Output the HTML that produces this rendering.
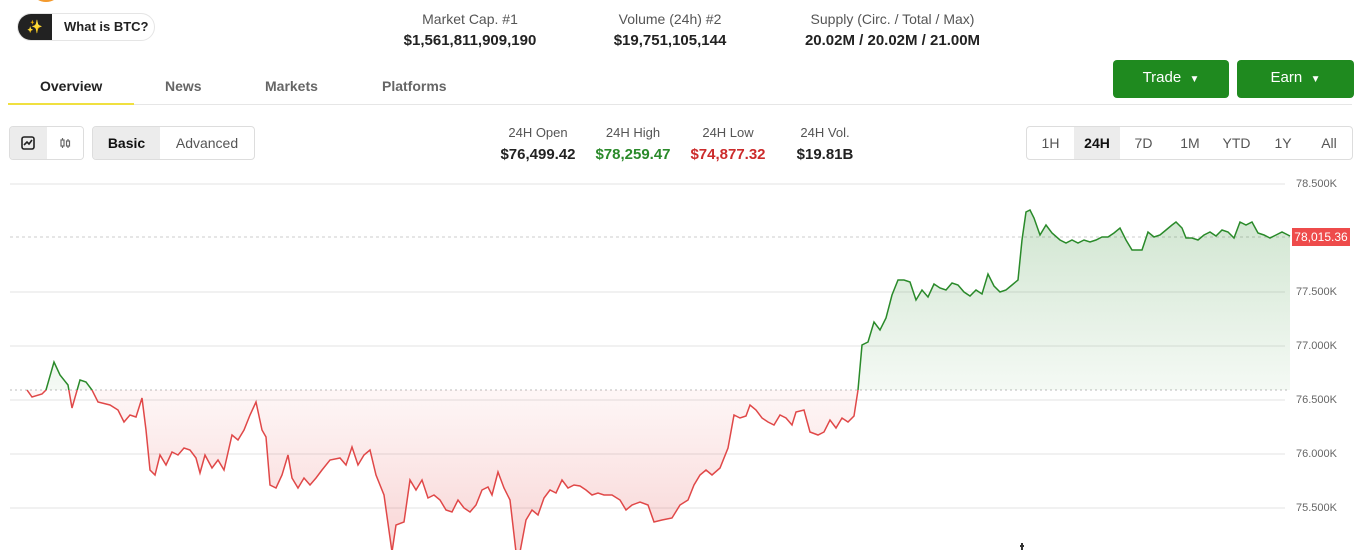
<!DOCTYPE html>
<html><head><meta charset="utf-8"><style>
*{margin:0;padding:0;box-sizing:border-box}
body{width:1370px;height:550px;overflow:hidden;background:#fff;font-family:"Liberation Sans",sans-serif;color:#222;position:relative}
.a{position:absolute}
.stat{text-align:center;font-size:14px;color:#555}
.stat b{display:block;font-size:15px;color:#222;margin-top:5px}
.tab{font-size:14px;color:#666;font-weight:bold}
.btn{background:#1f8a1f;color:#fff;font-size:15px;border-radius:4px;text-align:center;line-height:36px;height:38px}
.seg{border:1px solid #ddd;border-radius:4px;display:flex;overflow:hidden;height:34px}
.seg div{display:flex;align-items:center;justify-content:center;font-size:14px;color:#555}
.seg .on{background:#ececec;color:#111;font-weight:bold}
.ohl{text-align:center;font-size:13px;color:#555}
.ohl b{display:block;font-size:15px;margin-top:6px;color:#222}
.yl{position:absolute;left:1296px;font-size:11px;color:#666}
</style></head><body>
<div class="a" style="left:34px;top:-14px;width:24px;height:16px;border-radius:50%;background:#f39a2e"></div>
<div class="a" style="left:17px;top:13px;width:138px;height:28px;border:1px solid #e5e5e5;border-radius:14px;overflow:hidden;display:flex">
<div style="width:34px;background:#222;color:#f5c518;font-size:13px;text-align:center;line-height:26px">✨</div>
<div style="font-size:13px;font-weight:bold;line-height:26px;padding-left:12px">What is BTC?</div></div>
<div class="a stat" style="left:370px;top:11px;width:200px">Market Cap. #1<b>$1,561,811,909,190</b></div>
<div class="a stat" style="left:580px;top:11px;width:180px">Volume (24h) #2<b>$19,751,105,144</b></div>
<div class="a stat" style="left:780px;top:11px;width:225px">Supply (Circ. / Total / Max)<b>20.02M / 20.02M / 21.00M</b></div>
<div class="a tab" style="left:40px;top:78px;color:#222">Overview</div>
<div class="a tab" style="left:165px;top:78px">News</div>
<div class="a tab" style="left:265px;top:78px">Markets</div>
<div class="a tab" style="left:382px;top:78px">Platforms</div>
<div class="a" style="left:8px;top:104px;width:1344px;height:1px;background:#e6e6e6"></div>
<div class="a" style="left:8px;top:103px;width:126px;height:2px;background:#f0e040"></div>
<div class="a btn" style="left:1113px;top:60px;width:116px">Trade &nbsp;<span style="font-size:10px">▼</span></div>
<div class="a btn" style="left:1237px;top:60px;width:117px">Earn &nbsp;<span style="font-size:10px">▼</span></div>
<div class="a seg" style="left:9px;top:126px;width:75px"><div class="on" style="width:37px">
<svg width="14" height="14" viewBox="0 0 14 14"><rect x="1" y="1" width="12" height="12" rx="2" fill="none" stroke="#222" stroke-width="1.6"/><path d="M3 9 L6 6 L8 8 L11 4" fill="none" stroke="#222" stroke-width="1.6"/></svg></div>
<div style="width:37px;background:#fff"><svg width="14" height="14" viewBox="0 0 14 14"><rect x="3" y="4" width="3" height="6" fill="none" stroke="#666" stroke-width="1.2"/><rect x="8.5" y="5" width="3" height="5" fill="none" stroke="#666" stroke-width="1.2"/><path d="M4.5 2v2M4.5 10v2M10 3v2M10 10v2" stroke="#666" stroke-width="1.2"/></svg></div></div>
<div class="a seg" style="left:92px;top:126px;width:163px"><div class="on" style="width:67px">Basic</div><div style="flex:1">Advanced</div></div>
<div class="a ohl" style="left:498px;top:125px;width:80px">24H Open<b>$76,499.42</b></div>
<div class="a ohl" style="left:593px;top:125px;width:80px">24H High<b style="color:#2a8a2a">$78,259.47</b></div>
<div class="a ohl" style="left:688px;top:125px;width:80px">24H Low<b style="color:#cc2b2b">$74,877.32</b></div>
<div class="a ohl" style="left:785px;top:125px;width:80px">24H Vol.<b>$19.81B</b></div>
<div class="a seg" style="left:1026px;top:126px;width:327px"><div style="width:47px">1H</div><div class="on" style="width:46px">24H</div><div style="width:47px">7D</div><div style="width:46px">1M</div><div style="width:47px">YTD</div><div style="width:46px">1Y</div><div style="flex:1">All</div></div>
<svg class="a" style="left:0;top:0" width="1370" height="550">
<defs>
<linearGradient id="gg" x1="0" y1="210" x2="0" y2="390" gradientUnits="userSpaceOnUse"><stop offset="0" stop-color="#2a8a2a" stop-opacity=".22"/><stop offset="1" stop-color="#2a8a2a" stop-opacity=".05"/></linearGradient>
<linearGradient id="rg" x1="0" y1="390" x2="0" y2="550" gradientUnits="userSpaceOnUse"><stop offset="0" stop-color="#e03030" stop-opacity=".04"/><stop offset="1" stop-color="#e03030" stop-opacity=".2"/></linearGradient>
<clipPath id="up"><rect x="0" y="0" width="1370" height="390"/></clipPath>
<clipPath id="dn"><rect x="0" y="390" width="1370" height="200"/></clipPath>
<polygon id="f" points="27,390 27,390 32,397 42,394 46,390 54,362 60,375 68,385 72,408 80,380 86,382 92,390 98,402 110,405 118,410 124,422 130,415 136,417 142,398 146,430 150,470 155,475 160,455 166,465 172,452 178,455 184,448 190,450 196,458 200,473 205,455 212,468 218,460 224,470 232,435 238,440 244,430 250,415 256,402 262,430 266,437 270,485 276,488 282,475 288,455 292,478 298,488 304,478 310,485 316,478 322,470 330,460 340,458 346,465 352,447 358,465 364,455 370,450 376,475 384,495 392,552 396,525 404,522 410,480 416,490 422,480 428,498 434,495 440,500 446,510 452,512 458,500 464,508 470,512 476,505 482,490 488,487 492,495 498,472 504,488 510,500 516,552 520,552 526,520 532,510 538,515 544,498 550,490 556,493 562,480 568,488 574,485 580,486 586,490 592,495 598,493 604,495 612,495 620,500 626,510 632,505 640,502 648,505 654,522 662,520 672,518 680,505 688,500 694,485 700,475 706,470 712,475 720,468 728,448 734,415 740,418 746,416 750,405 756,410 762,418 768,422 774,425 780,415 786,418 792,425 796,412 804,410 810,432 818,435 824,432 830,420 836,428 842,418 848,422 854,416 858,390 862,345 868,342 874,322 880,330 886,318 892,295 898,280 904,280 910,282 916,300 922,290 928,297 934,284 940,288 946,290 952,283 958,285 964,292 970,296 976,290 982,294 988,274 994,286 1000,292 1006,290 1012,285 1018,280 1022,240 1026,212 1030,210 1034,218 1040,235 1046,225 1052,233 1060,240 1066,243 1072,240 1078,243 1084,240 1090,242 1096,240 1102,237 1108,237 1114,233 1120,228 1126,240 1132,250 1138,250 1142,250 1148,232 1154,237 1160,235 1166,230 1172,225 1176,222 1182,228 1186,238 1192,238 1198,240 1204,235 1210,232 1216,236 1222,230 1228,232 1234,238 1240,222 1246,225 1252,222 1258,233 1264,235 1270,238 1276,235 1282,232 1290,236 1290,390"/>
<polyline id="ln" fill="none" stroke-width="1.5" points="27,390 32,397 42,394 46,390 54,362 60,375 68,385 72,408 80,380 86,382 92,390 98,402 110,405 118,410 124,422 130,415 136,417 142,398 146,430 150,470 155,475 160,455 166,465 172,452 178,455 184,448 190,450 196,458 200,473 205,455 212,468 218,460 224,470 232,435 238,440 244,430 250,415 256,402 262,430 266,437 270,485 276,488 282,475 288,455 292,478 298,488 304,478 310,485 316,478 322,470 330,460 340,458 346,465 352,447 358,465 364,455 370,450 376,475 384,495 392,552 396,525 404,522 410,480 416,490 422,480 428,498 434,495 440,500 446,510 452,512 458,500 464,508 470,512 476,505 482,490 488,487 492,495 498,472 504,488 510,500 516,552 520,552 526,520 532,510 538,515 544,498 550,490 556,493 562,480 568,488 574,485 580,486 586,490 592,495 598,493 604,495 612,495 620,500 626,510 632,505 640,502 648,505 654,522 662,520 672,518 680,505 688,500 694,485 700,475 706,470 712,475 720,468 728,448 734,415 740,418 746,416 750,405 756,410 762,418 768,422 774,425 780,415 786,418 792,425 796,412 804,410 810,432 818,435 824,432 830,420 836,428 842,418 848,422 854,416 858,390 862,345 868,342 874,322 880,330 886,318 892,295 898,280 904,280 910,282 916,300 922,290 928,297 934,284 940,288 946,290 952,283 958,285 964,292 970,296 976,290 982,294 988,274 994,286 1000,292 1006,290 1012,285 1018,280 1022,240 1026,212 1030,210 1034,218 1040,235 1046,225 1052,233 1060,240 1066,243 1072,240 1078,243 1084,240 1090,242 1096,240 1102,237 1108,237 1114,233 1120,228 1126,240 1132,250 1138,250 1142,250 1148,232 1154,237 1160,235 1166,230 1172,225 1176,222 1182,228 1186,238 1192,238 1198,240 1204,235 1210,232 1216,236 1222,230 1228,232 1234,238 1240,222 1246,225 1252,222 1258,233 1264,235 1270,238 1276,235 1282,232 1290,236"/>
</defs>
<g stroke="#e3e3e3" stroke-width="1"><path d="M10 184H1285M10 292H1285M10 346H1285M10 400H1285M10 454H1285M10 508H1285"/></g>
<path d="M10 237H1290" stroke="#ccc" stroke-dasharray="3 3"/>
<path d="M10 390H1290" stroke="#bbb" stroke-dasharray="2 3"/>
<use href="#f" fill="url(#gg)" clip-path="url(#up)"/>
<use href="#f" fill="url(#rg)" clip-path="url(#dn)"/>
<use href="#ln" stroke="#2a8a2a" clip-path="url(#up)"/>
<use href="#ln" stroke="#e04848" clip-path="url(#dn)"/>
<path d="M1022 543V550M1020 546H1024" stroke="#333" stroke-width="2"/>
</svg>
<div class="yl" style="top:178px">78.500K</div>
<div class="a" style="left:1292px;top:228px;width:58px;height:18px;background:#ee4b4b;color:#fff;font-size:12px;line-height:18px;text-align:center">78,015.36</div>
<div class="yl" style="top:286px">77.500K</div>
<div class="yl" style="top:340px">77.000K</div>
<div class="yl" style="top:394px">76.500K</div>
<div class="yl" style="top:448px">76.000K</div>
<div class="yl" style="top:502px">75.500K</div>
</body></html>
